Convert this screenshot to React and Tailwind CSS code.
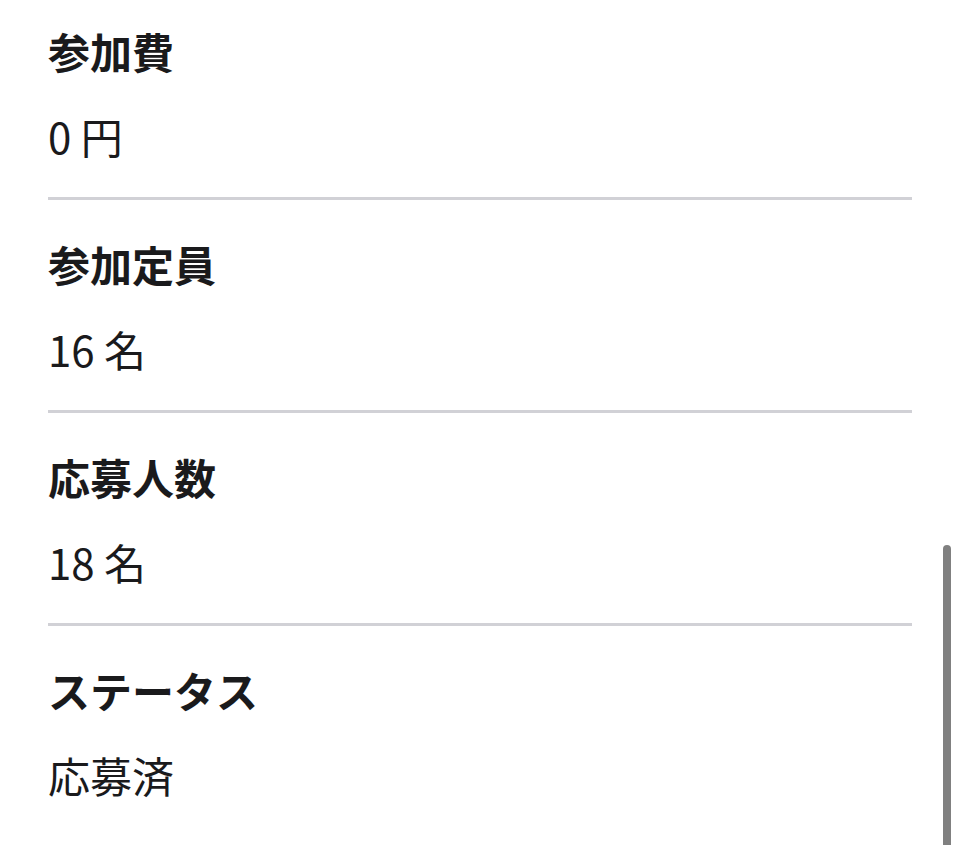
export default function App() {
  const items = [
    { label: "参加費", value: "0 円" },
    { label: "参加定員", value: "16 名" },
    { label: "応募人数", value: "18 名" },
    { label: "ステータス", value: "応募済" },
  ];
  return (
    <div
      className="relative h-[845px] w-[960px] overflow-hidden bg-white text-[#1a1a1c]"
      style={{ fontFamily: '"Noto Sans CJK JP", "Noto Sans", sans-serif' }}
    >
      <div className="px-[48px] pt-[19px]">
        {items.map((it, i) => (
          <div key={i} className={i > 0 ? "pt-[32px]" : ""}>
            <div className="text-[42px] font-bold leading-[63px]">{it.label}</div>
            <div className="mt-[22px] text-[42px] font-normal leading-[63px]">{it.value}</div>
            {i < items.length - 1 && (
              <div className="mt-[30px] h-[3px] bg-[#d1d1d6]" />
            )}
          </div>
        ))}
      </div>
      <div className="absolute left-[943px] top-[545px] h-[320px] w-[8px] rounded-full bg-[#808080]" />
    </div>
  );
}
